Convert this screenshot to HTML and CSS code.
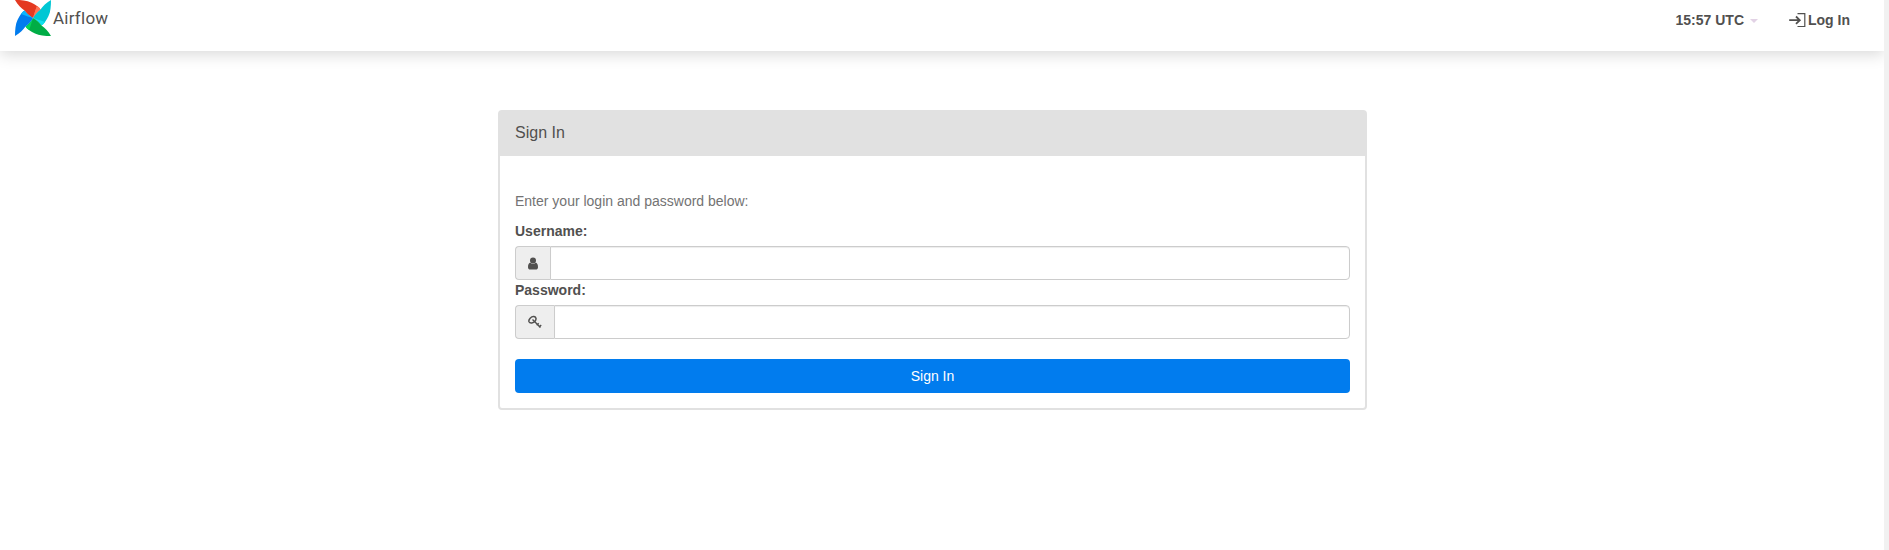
FILE: index.html
```html
<!DOCTYPE html>
<html lang="en">
<head>
<meta charset="utf-8">
<title>Airflow</title>
<link rel="stylesheet" href="styles.css">
</head>
<body>
<div class="page">
  <header class="navbar">
    <a class="brand">
      <svg class="brand-logo" viewBox="-18 -18 36 36">
        <defs>
          <path id="blade" d="M-18-18C-12-18-6-17.500-2-15.500C2-13.500 6-11 7.500-8.500C5-6.500 2-4 0 0C-4-2-6.500-5-8.500-7.500C-12-10-15-13-18-18Z"/>
          <path id="fold" d="M0 0C1-3 2-7 4-12C5.500-11 6.800-10 7.500-8.500C5-6.500 2-4 0 0Z"/>
        </defs>
        <use href="#blade" fill="#e43921"/><use href="#fold" fill="#ff7557"/>
        <g transform="rotate(90)"><use href="#blade" fill="#00c7d4"/><use href="#fold" fill="#11e1ee"/></g>
        <g transform="rotate(180)"><use href="#blade" fill="#00ad46"/><use href="#fold" fill="#04d659"/></g>
        <g transform="rotate(270)"><use href="#blade" fill="#017cee"/><use href="#fold" fill="#0cb6ff"/></g>
        <use href="#fold" fill="#ff7557"/>
      </svg>
      <span class="brand-name">Airflow</span>
    </a>
    <nav class="nav-right">
      <a class="clock">15:57 UTC<span class="caret"></span></a>
      <a class="login"><svg class="login-icon" viewBox="0 0 17 15"><path d="M8.500 .7H15.800V13.500H8.500" fill="none" stroke="#51504f" stroke-width="1.200"/><path d="M.2 7.200H10.500M7 3.500L10.800 7.200L7 10.900" fill="none" stroke="#51504f" stroke-width="1.800"/></svg>Log In</a>
    </nav>
  </header>
  <main class="panel">
    <h1 class="panel-heading">Sign In</h1>
    <form class="panel-body">
      <p class="help">Enter your login and password below:</p>
      <label class="label" for="username">Username:</label>
      <div class="input-group">
        <span class="addon"><svg class="user-icon" viewBox="0 0 10 13"><circle cx="5" cy="3.500" r="3"/><path d="M2.200 5.500C.6 6 0 8 0 10.200C0 11.800 1 12.500 2.200 12.500H7.800C9 12.500 10 11.800 10 10.200C10 8 9.400 6 7.800 5.500C6.500 7.300 3.500 7.300 2.200 5.500Z"/></svg></span>
        <input class="field" id="username" type="text">
      </div>
      <label class="label" for="password">Password:</label>
      <div class="input-group">
        <span class="addon"><svg class="key-icon" viewBox="0 0 14 14"><path d="M1 6.700C.3 4.500 3.200 1.200 6 1.600C8.500 2.100 8.500 4.500 7 6.200C5.400 8 2 8.800 1 6.700Z" fill="none" stroke="#51504f" stroke-width="1.500"/><path d="M4.500 4.500L12.500 12.500M8.700 10.200L10.700 8.200M11 12.200L13.200 10" fill="none" stroke="#51504f" stroke-width="1.400"/></svg></span>
        <input class="field" id="password" type="password">
      </div>
      <button class="submit" type="button">Sign In</button>
    </form>
  </main>
</div>
</body>
</html>
```

FILE: styles.css
```css
* { box-sizing: border-box; }
body {
  margin: 0;
  background: #f1f1f1;
  color: #51504f;
  font: 14px/20px "Liberation Sans", Arial, sans-serif;
}
.page {
  width: 1884px;
  height: 550px;
  background: #fff;
  overflow: hidden;
}
.navbar {
  height: 51px;
  display: flex;
  justify-content: space-between;
  background: #fff;
  box-shadow: 0 3px 15px rgba(0, 0, 0, .16);
}
.brand { display: flex; padding-left: 15px; }
.brand-logo { width: 36px; height: 36px; }
.brand-name {
  margin-left: 2px;
  padding-top: 8px;
  font: 17px/20px Roboto, sans-serif;
  letter-spacing: .25px;
}
.nav-right { display: flex; font-weight: bold; padding: 10px 34px 0 0; }
.clock { display: flex; margin-right: 31px; }
.caret {
  margin: 9px 0 0 6px;
  width: 8px;
  height: 4px;
  border: 4px solid transparent;
  border-top-color: #e2d2e5;
  border-bottom: 0;
}
.login { display: flex; }
.login-icon { width: 17px; height: 15px; margin: 3px 2px 0 0; }
.panel {
  width: 869px;
  height: 300px;
  margin: 59px 0 0 498px;
  border: 2px solid #e1e1e1;
  border-radius: 4px;
}
.panel-heading {
  height: 44px;
  margin: 0;
  padding: 11px 15px;
  background: #e1e1e1;
  font-size: 16px;
  font-weight: normal;
  line-height: 20px;
}
.panel-body { padding: 35px 15px 0; }
.help { margin: 0 0 10px; color: #737373; }
.label { display: block; height: 25px; font-weight: bold; }
.input-group { display: flex; height: 34px; }
.addon {
  display: flex;
  align-items: center;
  padding: 0 12px;
  background: #eee;
  border: 1px solid #ccc;
  border-right: 0;
  border-radius: 4px 0 0 4px;
}
.user-icon { width: 10px; height: 13px; fill: #51504f; }
.key-icon { width: 14px; height: 14px; }
.field {
  flex: 1;
  min-width: 0;
  border: 1px solid #ccc;
  border-radius: 0 4px 4px 0;
  box-shadow: inset 0 1px 1px rgba(0, 0, 0, .075);
  outline: 0;
}
.submit {
  display: block;
  width: 100%;
  height: 34px;
  margin-top: 20px;
  border: 0;
  border-radius: 4px;
  background: #017cee;
  color: #fff;
  font: inherit;
}
```
